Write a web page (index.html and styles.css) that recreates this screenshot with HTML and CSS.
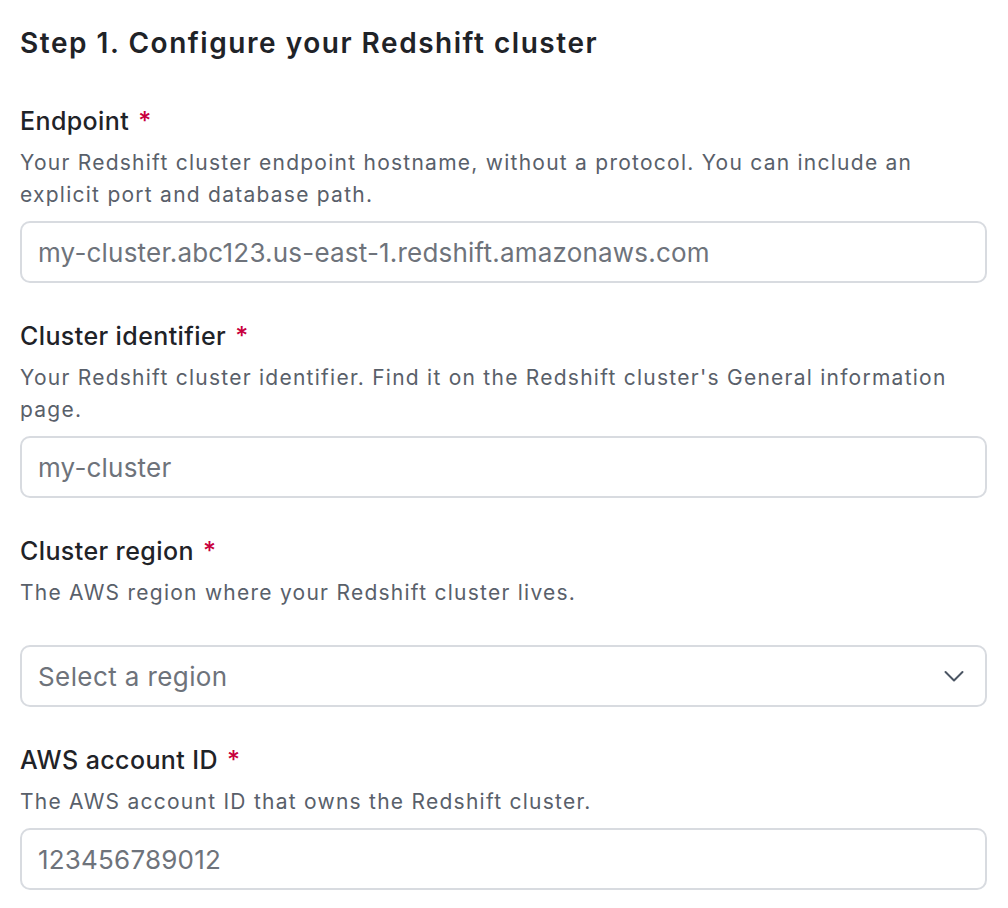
FILE: index.html
```html
<!DOCTYPE html>
<html lang="en">
<head>
<meta charset="utf-8">
<title>Configure Redshift</title>
<link rel="stylesheet" href="styles.css">
</head>
<body>
<main class="page">
  <h1 class="title">Step 1. Configure your Redshift cluster</h1>

  <div class="field">
    <label class="label" for="endpoint">Endpoint <span class="req">*</span></label>
    <p class="desc">Your Redshift cluster endpoint hostname, without a protocol. You can include an explicit port and database path.</p>
    <input class="input" id="endpoint" type="text" placeholder="my-cluster.abc123.us-east-1.redshift.amazonaws.com">
  </div>

  <div class="field">
    <label class="label" for="cid">Cluster identifier <span class="req">*</span></label>
    <p class="desc">Your Redshift cluster identifier. Find it on the Redshift cluster's General information page.</p>
    <input class="input" id="cid" type="text" placeholder="my-cluster">
  </div>

  <div class="field">
    <label class="label" for="region">Cluster region <span class="req">*</span></label>
    <p class="desc">The AWS region where your Redshift cluster lives.</p>
    <div class="select select-spaced">
      <span class="select-text">Select a region</span>
      <svg class="chevron" width="20" height="12" viewBox="0 0 20 12" aria-hidden="true">
        <path d="M1.5 2 L10 10.5 L18.5 2" fill="none" stroke="#4b5563" stroke-width="2" stroke-linecap="round" stroke-linejoin="round"/>
      </svg>
    </div>
  </div>

  <div class="field">
    <label class="label" for="acct">AWS account ID <span class="req">*</span></label>
    <p class="desc">The AWS account ID that owns the Redshift cluster.</p>
    <input class="input" id="acct" type="text" placeholder="123456789012">
  </div>
</main>
</body>
</html>
```

FILE: styles.css
```css
html, body {
  margin: 0;
  padding: 0;
  background: #ffffff;
}

body {
  font-family: Inter, "Noto Sans", "Liberation Sans", sans-serif;
  color: #1f2328;
}

.page {
  padding: 25px 21px 20px 20px;
  display: flex;
  flex-direction: column;
}

.title {
  margin: 0;
  font-size: 28px;
  line-height: 36px;
  font-weight: 600;
  color: #1f2328;
  letter-spacing: 1.53px;
}

.field {
  display: flex;
  flex-direction: column;
  margin-top: 37px;
}

.field:first-of-type {
  margin-top: 44px;
}

.label {
  font-size: 25px;
  line-height: 32px;
  font-weight: 500;
  color: #1f2328;
  letter-spacing: 0.4px;
}

.req {
  color: #c8003d;
  margin-left: 2px;
}

.desc {
  margin: 10px 0 0 0;
  font-size: 21px;
  line-height: 32px;
  color: #59606a;
  letter-spacing: 1.25px;
}

.input, .select {
  box-sizing: border-box;
  margin-top: 10px;
  height: 62px;
  width: 100%;
  border: 2px solid #d8dbe0;
  border-radius: 10px;
  padding: 0 16px;
  font-family: Inter, "Noto Sans", "Liberation Sans", sans-serif;
  font-size: 26px;
  color: #1f2328;
  background: #ffffff;
  outline: none;
}

.input::placeholder {
  color: #6e737b;
  letter-spacing: 0.2px;
}

.select {
  display: flex;
  align-items: center;
  justify-content: space-between;
}

.select-spaced {
  margin-top: 36px;
}

.select-text {
  color: #6e737b;
  letter-spacing: 0.4px;
}

.chevron {
  margin-right: 5px;
}
```
